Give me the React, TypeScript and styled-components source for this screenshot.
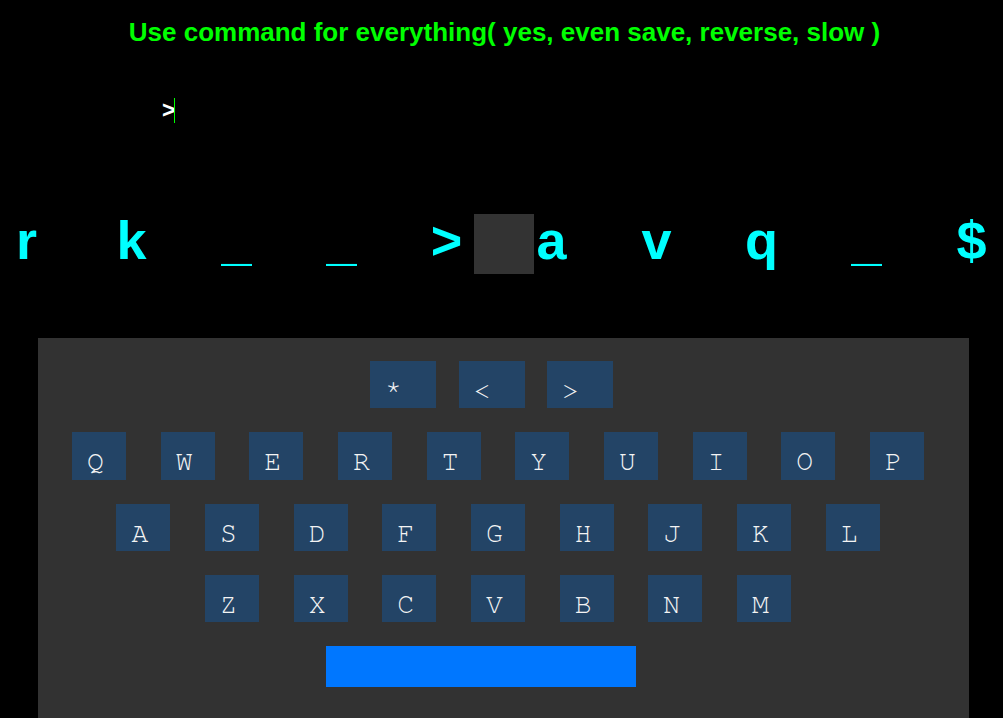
import React from 'react'
import styled, { createGlobalStyle } from 'styled-components'

const GlobalStyle = createGlobalStyle`
  html, body {
    margin: 0;
    padding: 0;
    background: #000;
  }
  body {
    font-family: 'Liberation Sans', Arial, sans-serif;
  }
`

const TAPE = ['r', 'k', '_', '_', '>', 'a', 'v', 'q', '_', '$']
const TOP_KEYS = ['*', '<', '>']
const ROWS = [
  ['Q', 'W', 'E', 'R', 'T', 'Y', 'U', 'I', 'O', 'P'],
  ['A', 'S', 'D', 'F', 'G', 'H', 'J', 'K', 'L'],
  ['Z', 'X', 'C', 'V', 'B', 'N', 'M'],
]

const Page = styled.div`
  display: flex;
  flex-direction: column;
  width: 1003px;
  min-height: 718px;
`

const Title = styled.div`
  margin-top: 17px;
  padding-left: 6px;
  color: #00ff00;
  font-size: 26px;
  font-weight: bold;
  line-height: 30px;
  text-align: center;
`

const Prompt = styled.div`
  margin-top: 51px;
  padding-left: 162px;
  display: flex;
  align-items: stretch;
  color: #fff;
  font-size: 23px;
  font-weight: bold;
  line-height: 25px;
`

const Sign = styled.span`
  width: 12px;
  overflow: visible;
`

const Caret = styled.span`
  width: 1px;
  background: #00ff00;
`

const Tape = styled.div`
  position: relative;
  margin-top: 87px;
  display: flex;
  gap: 52px;
  height: 60px;
  color: #00ffff;
  font-size: 54px;
  font-weight: bold;
  line-height: 60px;
`

const Cell = styled.span`
  position: relative;
  z-index: 1;
  width: 53px;
  text-align: center;
`

const Head = styled.div`
  position: absolute;
  left: 474px;
  top: 4px;
  width: 60px;
  height: 60px;
  background: #333;
`

const Keyboard = styled.div`
  margin: 68px 34px 0 38px;
  padding: 23px 0 40px;
  background: #323232;
  display: flex;
  flex-direction: column;
  gap: 24px;
`

const Row = styled.div<{ shift: number; gap: number }>`
  display: flex;
  justify-content: center;
  gap: ${({ gap }) => gap}px;
  padding-right: ${({ shift }) => shift}px;
`

const Key = styled.div<{ wide?: boolean }>`
  box-sizing: border-box;
  width: ${({ wide }) => (wide ? 66 : 54)}px;
  height: 47.25px;
  padding: 18px 0 0 15px;
  background: #234466;
  color: #f4f4f4;
  font-family: 'Nimbus Mono PS', 'Nimbus Mono L', FreeMono, 'Courier New', Courier, monospace;
  font-size: 28px;
  line-height: 24px;
`

const SpaceBar = styled.div`
  width: 310px;
  height: 41px;
  background: #0077ff;
`

export default function App() {
  return (
    <Page>
      <GlobalStyle />
      <Title>Use command for everything( yes, even save, reverse, slow )</Title>
      <Prompt>
        <Sign>&gt;</Sign>
        <Caret />
      </Prompt>
      <Tape>
        <Head />
        {TAPE.map((c, i) => (
          <Cell key={i}>{c}</Cell>
        ))}
      </Tape>
      <Keyboard>
        <Row shift={24} gap={22.5}>
          {TOP_KEYS.map((k) => (
            <Key wide key={k}>
              {k}
            </Key>
          ))}
        </Row>
        {ROWS.map((row, i) => (
          <Row shift={11} gap={34.67} key={i}>
            {row.map((k) => (
              <Key key={k}>{k}</Key>
            ))}
          </Row>
        ))}
        <Row shift={45} gap={0}>
          <SpaceBar />
        </Row>
      </Keyboard>
    </Page>
  )
}
